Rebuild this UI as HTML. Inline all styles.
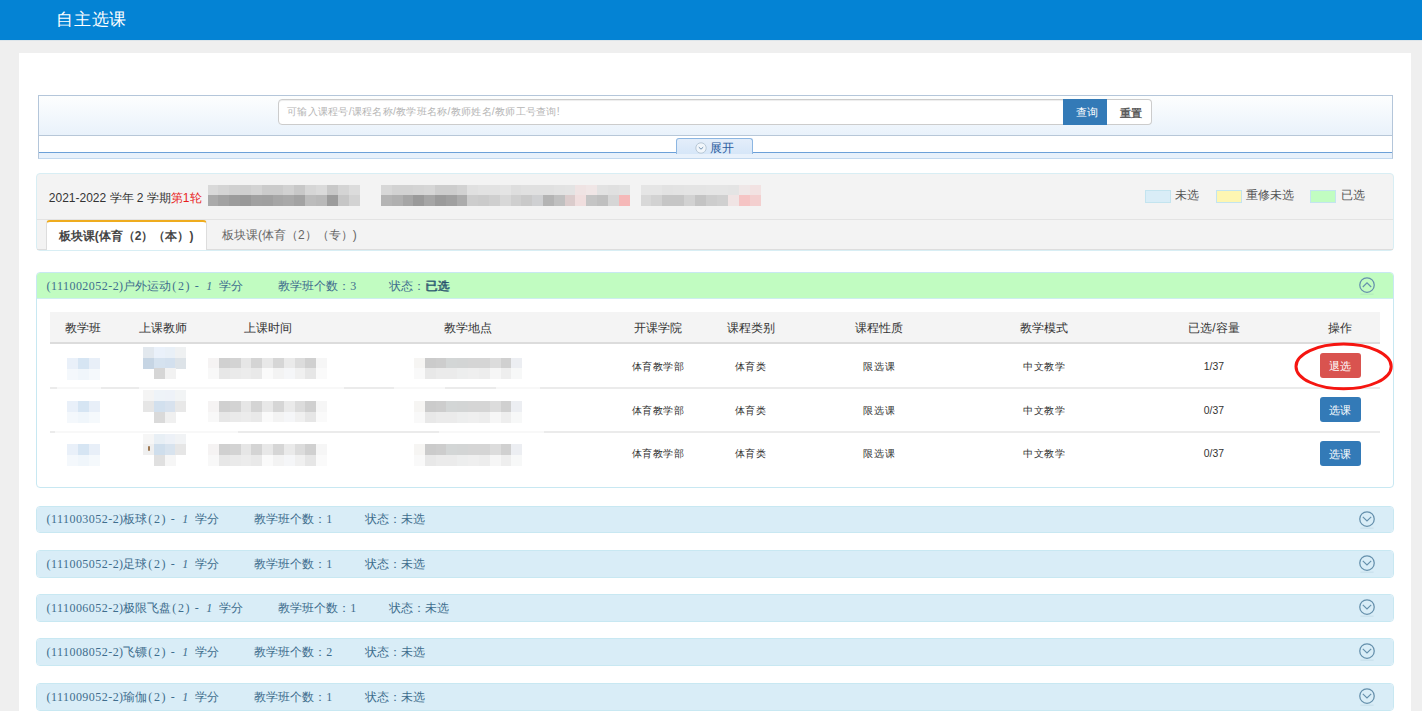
<!DOCTYPE html><html><head><meta charset="utf-8"><style>*{margin:0;padding:0;box-sizing:border-box}
html,body{width:1422px;height:711px;overflow:hidden;background:#efefef;font-family:"Liberation Sans",sans-serif;color:#333;position:relative}
.a{position:absolute}
#hdr{left:0;top:0;width:1422px;height:40px;background:#0483d4}
#title{left:55.8px;top:8px;letter-spacing:.9px;font-size:17.4px;color:#fff;line-height:22px;white-space:nowrap}
#main{left:19px;top:53px;width:1392px;height:700px;background:#fff}
#sbox{left:38px;top:95px;width:1355px;height:64px;border:1px solid #b4c6da;border-bottom-color:#c2d8ee;background:#fff}
#sbox .g{left:0;top:0;width:1353px;height:40px;background:linear-gradient(#fdfefe,#e9f2fb);border-bottom:1px solid #b7c7d8}
#sbox .strip{left:0;top:56px;width:1353px;height:6px;background:#e8f1fb;border-top:1.5px solid #6ca0d8}
#inp{left:239.3px;top:3.4px;width:785.7px;height:25.6px;border:1px solid #ccc;border-radius:4px 0 0 4px;background:#fff;box-shadow:inset 0 1px 1px rgba(0,0,0,.075)}
#inp span{position:absolute;left:7.7px;top:5.5px;letter-spacing:.28px;font-size:10.4px;line-height:12px;color:#b5b5b5;white-space:nowrap}
#bq{left:1024px;top:3px;width:44px;height:26px;background:#337ab7;color:#fff;font-size:11px;text-align:center;line-height:26.5px;padding-left:3px}
#br{left:1068px;top:3px;width:45px;height:26px;background:#fff;border:1px solid #ccc;border-left:none;border-radius:0 4px 4px 0;color:#5c5c5c;font-size:11px;text-align:center;line-height:26px;padding-left:4px;font-weight:bold}
#exp{left:636.6px;top:41.7px;width:77.5px;height:16px;border:1.5px solid #8cb6e2;border-bottom:none;border-radius:3px 3px 0 0;background:linear-gradient(#e4eefa,#d6e6f8)}
#exp .t{left:33px;top:2px;font-size:12px;line-height:14px;color:#2a5b9e;white-space:nowrap}
#info{left:36px;top:173px;width:1358px;height:78px;background:#f3f3f3;border:1px solid #d8eef4;border-radius:4px}
#info .ln{left:0;top:45px;width:1356px;height:1px;background:#e3e3e3}
#sem{left:11.8px;top:15.5px;font-size:12px;line-height:16px;color:#333;white-space:nowrap}
#sem b{font-weight:normal;color:#e81e1e}
.blur i{position:absolute;display:block}
#tab1{left:8.8px;top:45.6px;width:161.2px;height:30.4px;background:#fff;border-top:2px solid #efac1e;border-left:1px solid #ddd;border-right:1px solid #ddd;border-radius:4px 4px 0 0}
#tab1 span{position:absolute;left:12px;top:7.5px;font-size:12px;line-height:15px;font-weight:bold;color:#444;white-space:nowrap}
#tab2{left:185px;top:53.5px;font-size:12px;line-height:15px;color:#666;white-space:nowrap}
.lg{position:absolute;top:16.4px;width:26px;height:12.5px;border:1px solid #c3e4ef}
.lt{position:absolute;top:12.6px;font-size:12px;line-height:16px;color:#555;white-space:nowrap}
.cp{position:absolute;left:36px;width:1358px;border:1px solid #c8e8f2;border-radius:4px;background:#fff;overflow:hidden}
.ch{position:absolute;left:0;top:0;width:100%;height:26.5px;background:#d9edf7}
.hd span{position:absolute;white-space:nowrap;font-size:12px;line-height:14px;color:#3f6e8e}
.hd .ser{font-family:"Liberation Serif",serif}
.th{width:1330px;height:32px;background:#f4f4f4;border-bottom:2px solid #dcdcdc}
.hc{position:absolute;width:160px;margin-left:-80px;text-align:center;font-size:12px;line-height:14px;color:#333;white-space:nowrap}
.dc{position:absolute;width:160px;margin-left:-80px;text-align:center;letter-spacing:.6px;font-size:10.4px;line-height:13px;color:#333;white-space:nowrap}
.rl{position:absolute;width:1330px;height:2px;background:#e4e4e4}
.btn{position:absolute;width:41.5px;height:24.5px;border-radius:3px;color:#fff;font-size:11px;line-height:24px;text-align:center}
</style></head><body>
<div id="hdr" class="a"><div id="title" class="a">自主选课</div></div>
<div class="a" style="left:0;top:40px;width:1422px;height:1px;background:#dde5ea"></div>
<div id="main" class="a"></div>
<div id="sbox" class="a">
  <div class="g a"></div>
  <div id="inp" class="a"><span>可输入课程号/课程名称/教学班名称/教师姓名/教师工号查询!</span></div>
  <div id="bq" class="a">查询</div>
  <div id="br" class="a">重置</div>
  <div class="strip a"></div>
  <div id="exp" class="a"><svg class="a" style="left:18px;top:3px" width="12" height="12" viewBox="0 0 12 12"><circle cx="6" cy="6" r="5.2" fill="#f1f6fb" stroke="#b8c8d6" stroke-width="1"/><path d="M3.8 5.2 L6 7.2 L8.2 5.2" fill="none" stroke="#6f8fb0" stroke-width="1"/></svg><div class="t a">展开</div></div>
</div>
<div id="info" class="a">
  <div id="sem" class="a">2021-2022 学年 2 学期<b>第1轮</b></div>
  <div class="ln a"></div><div class="a" style="left:0;top:75px;width:1356px;height:1px;background:#dddddd"></div>
  <div id="tab1" class="a"><span>板块课(体育（2）（本）)</span></div>
  <div id="tab2" class="a">板块课(体育（2）（专）)</div>
  <div class="lg" style="left:1108px;background:#d9edf7"></div><div class="lt" style="left:1137.5px">未选</div>
  <div class="lg" style="left:1179px;background:#fdf6b2"></div><div class="lt" style="left:1209px">重修未选</div>
  <div class="lg" style="left:1273px;background:#c1fdc1"></div><div class="lt" style="left:1303.5px">已选</div>
</div>
<div class="blur">
<i style="left:207.5px;top:184.5px;width:11.2px;height:11.1px;background:#d9d9d9"></i><i style="left:218.3px;top:184.5px;width:11.2px;height:11.1px;background:#d4d4d4"></i><i style="left:229.2px;top:184.5px;width:11.2px;height:11.1px;background:#d0d0d0"></i><i style="left:240.1px;top:184.5px;width:11.2px;height:11.1px;background:#cfcfcf"></i><i style="left:250.9px;top:184.5px;width:11.2px;height:11.1px;background:#d3d3d3"></i><i style="left:261.8px;top:184.5px;width:11.2px;height:11.1px;background:#cbcbcb"></i><i style="left:272.6px;top:184.5px;width:11.2px;height:11.1px;background:#cbcbcb"></i><i style="left:283.4px;top:184.5px;width:11.2px;height:11.1px;background:#d1d1d1"></i><i style="left:294.3px;top:184.5px;width:11.2px;height:11.1px;background:#c8c8c8"></i><i style="left:305.1px;top:184.5px;width:11.2px;height:11.1px;background:#d6d6d6"></i><i style="left:316.0px;top:184.5px;width:11.2px;height:11.1px;background:#dadada"></i><i style="left:326.9px;top:184.5px;width:11.2px;height:11.1px;background:#c8c8c8"></i><i style="left:337.7px;top:184.5px;width:11.2px;height:11.1px;background:#d4d4d4"></i><i style="left:348.5px;top:184.5px;width:11.2px;height:11.1px;background:#dcdcdc"></i><i style="left:207.5px;top:195.3px;width:11.2px;height:11.1px;background:#aaaaaa"></i><i style="left:218.3px;top:195.3px;width:11.2px;height:11.1px;background:#a2a2a2"></i><i style="left:229.2px;top:195.3px;width:11.2px;height:11.1px;background:#9c9c9c"></i><i style="left:240.1px;top:195.3px;width:11.2px;height:11.1px;background:#999999"></i><i style="left:250.9px;top:195.3px;width:11.2px;height:11.1px;background:#a1a1a1"></i><i style="left:261.8px;top:195.3px;width:11.2px;height:11.1px;background:#a0a0a0"></i><i style="left:272.6px;top:195.3px;width:11.2px;height:11.1px;background:#a6a6a6"></i><i style="left:283.4px;top:195.3px;width:11.2px;height:11.1px;background:#a9a9a9"></i><i style="left:294.3px;top:195.3px;width:11.2px;height:11.1px;background:#a3a3a3"></i><i style="left:305.1px;top:195.3px;width:11.2px;height:11.1px;background:#bcbcbc"></i><i style="left:316.0px;top:195.3px;width:11.2px;height:11.1px;background:#b9b9b9"></i><i style="left:326.9px;top:195.3px;width:11.2px;height:11.1px;background:#9c9c9c"></i><i style="left:337.7px;top:195.3px;width:11.2px;height:11.1px;background:#c6c6c6"></i><i style="left:348.5px;top:195.3px;width:11.2px;height:11.1px;background:#d3d3d3"></i>
<i style="left:381.0px;top:184.5px;width:11.1px;height:11.1px;background:#d7d7d7"></i><i style="left:391.8px;top:184.5px;width:11.1px;height:11.1px;background:#d2d2d2"></i><i style="left:402.6px;top:184.5px;width:11.1px;height:11.1px;background:#d2d2d2"></i><i style="left:413.4px;top:184.5px;width:11.1px;height:11.1px;background:#d4d4d4"></i><i style="left:424.2px;top:184.5px;width:11.1px;height:11.1px;background:#d6d6d6"></i><i style="left:435.0px;top:184.5px;width:11.1px;height:11.1px;background:#cdcdcd"></i><i style="left:445.8px;top:184.5px;width:11.1px;height:11.1px;background:#cdcdcd"></i><i style="left:456.6px;top:184.5px;width:11.1px;height:11.1px;background:#d2d2d2"></i><i style="left:467.4px;top:184.5px;width:11.1px;height:11.1px;background:#e0e0e0"></i><i style="left:478.2px;top:184.5px;width:11.1px;height:11.1px;background:#e2e2e2"></i><i style="left:489.0px;top:184.5px;width:11.1px;height:11.1px;background:#e2e2e2"></i><i style="left:499.8px;top:184.5px;width:11.1px;height:11.1px;background:#e4e4e4"></i><i style="left:510.6px;top:184.5px;width:11.1px;height:11.1px;background:#dedede"></i><i style="left:521.4px;top:184.5px;width:11.1px;height:11.1px;background:#e0e0e0"></i><i style="left:532.2px;top:184.5px;width:11.1px;height:11.1px;background:#e0e0e0"></i><i style="left:543.0px;top:184.5px;width:11.1px;height:11.1px;background:#e0e0e0"></i><i style="left:553.8px;top:184.5px;width:11.1px;height:11.1px;background:#e2e2e2"></i><i style="left:564.6px;top:184.5px;width:11.1px;height:11.1px;background:#e3e3e3"></i><i style="left:575.4px;top:184.5px;width:11.1px;height:11.1px;background:#efe3e3"></i><i style="left:586.2px;top:184.5px;width:11.1px;height:11.1px;background:#f0e6e6"></i><i style="left:597.0px;top:184.5px;width:11.1px;height:11.1px;background:#e2e2e2"></i><i style="left:607.8px;top:184.5px;width:11.1px;height:11.1px;background:#e0e0e0"></i><i style="left:618.6px;top:184.5px;width:11.1px;height:11.1px;background:#e2e2e2"></i><i style="left:381.0px;top:195.3px;width:11.1px;height:11.1px;background:#b4b4b4"></i><i style="left:391.8px;top:195.3px;width:11.1px;height:11.1px;background:#b0b0b0"></i><i style="left:402.6px;top:195.3px;width:11.1px;height:11.1px;background:#a6a6a6"></i><i style="left:413.4px;top:195.3px;width:11.1px;height:11.1px;background:#9a9a9a"></i><i style="left:424.2px;top:195.3px;width:11.1px;height:11.1px;background:#a6a6a6"></i><i style="left:435.0px;top:195.3px;width:11.1px;height:11.1px;background:#9b9b9b"></i><i style="left:445.8px;top:195.3px;width:11.1px;height:11.1px;background:#a0a0a0"></i><i style="left:456.6px;top:195.3px;width:11.1px;height:11.1px;background:#acacac"></i><i style="left:467.4px;top:195.3px;width:11.1px;height:11.1px;background:#cdcdcd"></i><i style="left:478.2px;top:195.3px;width:11.1px;height:11.1px;background:#cbcbcb"></i><i style="left:489.0px;top:195.3px;width:11.1px;height:11.1px;background:#cfcfcf"></i><i style="left:499.8px;top:195.3px;width:11.1px;height:11.1px;background:#d8d8d8"></i><i style="left:510.6px;top:195.3px;width:11.1px;height:11.1px;background:#cfcfcf"></i><i style="left:521.4px;top:195.3px;width:11.1px;height:11.1px;background:#c9c9c9"></i><i style="left:532.2px;top:195.3px;width:11.1px;height:11.1px;background:#cfd0d2"></i><i style="left:543.0px;top:195.3px;width:11.1px;height:11.1px;background:#b4b4b4"></i><i style="left:553.8px;top:195.3px;width:11.1px;height:11.1px;background:#c0c0c0"></i><i style="left:564.6px;top:195.3px;width:11.1px;height:11.1px;background:#dbcccc"></i><i style="left:575.4px;top:195.3px;width:11.1px;height:11.1px;background:#f0dede"></i><i style="left:586.2px;top:195.3px;width:11.1px;height:11.1px;background:#c5c5c5"></i><i style="left:597.0px;top:195.3px;width:11.1px;height:11.1px;background:#c0c0c0"></i><i style="left:607.8px;top:195.3px;width:11.1px;height:11.1px;background:#d6d6d6"></i><i style="left:618.6px;top:195.3px;width:11.1px;height:11.1px;background:#f5b8b8"></i>
<i style="left:640.5px;top:184.5px;width:11.2px;height:11.1px;background:#e5e5e5"></i><i style="left:651.4px;top:184.5px;width:11.2px;height:11.1px;background:#e5e5e5"></i><i style="left:662.3px;top:184.5px;width:11.2px;height:11.1px;background:#e2e2e2"></i><i style="left:673.2px;top:184.5px;width:11.2px;height:11.1px;background:#e3e3e3"></i><i style="left:684.1px;top:184.5px;width:11.2px;height:11.1px;background:#e4e4e4"></i><i style="left:695.0px;top:184.5px;width:11.2px;height:11.1px;background:#e4e4e4"></i><i style="left:705.9px;top:184.5px;width:11.2px;height:11.1px;background:#e5e5e5"></i><i style="left:716.8px;top:184.5px;width:11.2px;height:11.1px;background:#e5e5e5"></i><i style="left:727.7px;top:184.5px;width:11.2px;height:11.1px;background:#e4e4e4"></i><i style="left:738.6px;top:184.5px;width:11.2px;height:11.1px;background:#efe7e7"></i><i style="left:749.5px;top:184.5px;width:11.2px;height:11.1px;background:#f2e2e2"></i><i style="left:640.5px;top:195.3px;width:11.2px;height:11.1px;background:#d8d8d8"></i><i style="left:651.4px;top:195.3px;width:11.2px;height:11.1px;background:#d2d2d2"></i><i style="left:662.3px;top:195.3px;width:11.2px;height:11.1px;background:#c6c6c6"></i><i style="left:673.2px;top:195.3px;width:11.2px;height:11.1px;background:#c6c6c6"></i><i style="left:684.1px;top:195.3px;width:11.2px;height:11.1px;background:#d2d2d2"></i><i style="left:695.0px;top:195.3px;width:11.2px;height:11.1px;background:#c4c4c4"></i><i style="left:705.9px;top:195.3px;width:11.2px;height:11.1px;background:#cdcdcd"></i><i style="left:716.8px;top:195.3px;width:11.2px;height:11.1px;background:#d0d0d0"></i><i style="left:727.7px;top:195.3px;width:11.2px;height:11.1px;background:#f0e4e4"></i><i style="left:738.6px;top:195.3px;width:11.2px;height:11.1px;background:#f5c4c4"></i><i style="left:749.5px;top:195.3px;width:11.2px;height:11.1px;background:#f3cfcf"></i>
</div>
<div class="cp" style="top:272.3px;height:216.2px"><div class="ch" style="background:#c1fcc1;height:26px;border-bottom:1px solid #cdeef0"></div></div>
<div class="cp" style="top:506px;height:27px"><div class="ch"></div></div>
<div class="cp" style="top:550px;height:27.6px"><div class="ch"></div></div>
<div class="cp" style="top:594px;height:28px"><div class="ch"></div></div>
<div class="cp" style="top:638px;height:28px"><div class="ch"></div></div>
<div class="cp" style="top:683px;height:28px"><div class="ch"></div></div>
<div class="hd">
<span class="ser" style="left:46.5px;top:278.5px;letter-spacing:.46px">(111002052-2)</span><span class="cjk" style="left:123.3px;top:278.5px">户外运动</span><span class="ser" style="left:172.3px;top:278.5px;letter-spacing:1.6px">(2)</span><span class="ser" style="left:194.8px;top:278.5px">-</span><span class="ser" style="left:206.3px;top:278.5px;font-style:italic">1</span><span class="cjk" style="left:219.3px;top:278.5px">学分</span><span class="cjk" style="left:277.7px;top:278.5px">教学班个数：</span><span class="ser" style="left:350.2px;top:278.5px">3</span><span class="cjk" style="left:389.2px;top:278.5px">状态：<b style="font-weight:normal;color:#234f6c;text-shadow:.45px 0 0 #234f6c">已选</b></span>
<span class="ser" style="left:46.5px;top:512.2px;letter-spacing:.46px">(111003052-2)</span><span class="cjk" style="left:123.3px;top:512.2px">板球</span><span class="ser" style="left:148.3px;top:512.2px;letter-spacing:1.6px">(2)</span><span class="ser" style="left:170.8px;top:512.2px">-</span><span class="ser" style="left:182.3px;top:512.2px;font-style:italic">1</span><span class="cjk" style="left:195.3px;top:512.2px">学分</span><span class="cjk" style="left:253.7px;top:512.2px">教学班个数：</span><span class="ser" style="left:326.2px;top:512.2px">1</span><span class="cjk" style="left:365.2px;top:512.2px">状态：未选</span>
<span class="ser" style="left:46.5px;top:556.6px;letter-spacing:.46px">(111005052-2)</span><span class="cjk" style="left:123.3px;top:556.6px">足球</span><span class="ser" style="left:148.3px;top:556.6px;letter-spacing:1.6px">(2)</span><span class="ser" style="left:170.8px;top:556.6px">-</span><span class="ser" style="left:182.3px;top:556.6px;font-style:italic">1</span><span class="cjk" style="left:195.3px;top:556.6px">学分</span><span class="cjk" style="left:253.7px;top:556.6px">教学班个数：</span><span class="ser" style="left:326.2px;top:556.6px">1</span><span class="cjk" style="left:365.2px;top:556.6px">状态：未选</span>
<span class="ser" style="left:46.5px;top:600.8000000000001px;letter-spacing:.46px">(111006052-2)</span><span class="cjk" style="left:123.3px;top:600.8000000000001px">极限飞盘</span><span class="ser" style="left:172.3px;top:600.8000000000001px;letter-spacing:1.6px">(2)</span><span class="ser" style="left:194.8px;top:600.8000000000001px">-</span><span class="ser" style="left:206.3px;top:600.8000000000001px;font-style:italic">1</span><span class="cjk" style="left:219.3px;top:600.8000000000001px">学分</span><span class="cjk" style="left:277.7px;top:600.8000000000001px">教学班个数：</span><span class="ser" style="left:350.2px;top:600.8000000000001px">1</span><span class="cjk" style="left:389.2px;top:600.8000000000001px">状态：未选</span>
<span class="ser" style="left:46.5px;top:645.0px;letter-spacing:.46px">(111008052-2)</span><span class="cjk" style="left:123.3px;top:645.0px">飞镖</span><span class="ser" style="left:148.3px;top:645.0px;letter-spacing:1.6px">(2)</span><span class="ser" style="left:170.8px;top:645.0px">-</span><span class="ser" style="left:182.3px;top:645.0px;font-style:italic">1</span><span class="cjk" style="left:195.3px;top:645.0px">学分</span><span class="cjk" style="left:253.7px;top:645.0px">教学班个数：</span><span class="ser" style="left:326.2px;top:645.0px">2</span><span class="cjk" style="left:365.2px;top:645.0px">状态：未选</span>
<span class="ser" style="left:46.5px;top:690.2px;letter-spacing:.46px">(111009052-2)</span><span class="cjk" style="left:123.3px;top:690.2px">瑜伽</span><span class="ser" style="left:148.3px;top:690.2px;letter-spacing:1.6px">(2)</span><span class="ser" style="left:170.8px;top:690.2px">-</span><span class="ser" style="left:182.3px;top:690.2px;font-style:italic">1</span><span class="cjk" style="left:195.3px;top:690.2px">学分</span><span class="cjk" style="left:253.7px;top:690.2px">教学班个数：</span><span class="ser" style="left:326.2px;top:690.2px">1</span><span class="cjk" style="left:365.2px;top:690.2px">状态：未选</span>
</div>
<svg class="a" style="left:1357.7px;top:276.1px" width="18" height="20" viewBox="-9 -9 18 20"><circle cx="0" cy="0" r="7.25" fill="none" stroke="#6590ac" stroke-width="1.25"/><path d="M-4.2 2 L0 -2.1 L4.2 2" fill="none" stroke="#6590ac" stroke-width="1.15"/><rect x="-6.5" y="8.7" width="13" height=".9" fill="#6590ac" opacity=".18"/></svg>
<svg class="a" style="left:1357.7px;top:509.6px" width="18" height="20" viewBox="-9 -9 18 20"><circle cx="0" cy="0" r="7.25" fill="none" stroke="#6590ac" stroke-width="1.25"/><path d="M-4.2 -2.1 L0 2 L4.2 -2.1" fill="none" stroke="#6590ac" stroke-width="1.15"/><rect x="-6.5" y="8.7" width="13" height=".9" fill="#6590ac" opacity=".18"/></svg>
<svg class="a" style="left:1357.7px;top:553.6px" width="18" height="20" viewBox="-9 -9 18 20"><circle cx="0" cy="0" r="7.25" fill="none" stroke="#6590ac" stroke-width="1.25"/><path d="M-4.2 -2.1 L0 2 L4.2 -2.1" fill="none" stroke="#6590ac" stroke-width="1.15"/><rect x="-6.5" y="8.7" width="13" height=".9" fill="#6590ac" opacity=".18"/></svg>
<svg class="a" style="left:1357.7px;top:597.6px" width="18" height="20" viewBox="-9 -9 18 20"><circle cx="0" cy="0" r="7.25" fill="none" stroke="#6590ac" stroke-width="1.25"/><path d="M-4.2 -2.1 L0 2 L4.2 -2.1" fill="none" stroke="#6590ac" stroke-width="1.15"/><rect x="-6.5" y="8.7" width="13" height=".9" fill="#6590ac" opacity=".18"/></svg>
<svg class="a" style="left:1357.7px;top:641.6px" width="18" height="20" viewBox="-9 -9 18 20"><circle cx="0" cy="0" r="7.25" fill="none" stroke="#6590ac" stroke-width="1.25"/><path d="M-4.2 -2.1 L0 2 L4.2 -2.1" fill="none" stroke="#6590ac" stroke-width="1.15"/><rect x="-6.5" y="8.7" width="13" height=".9" fill="#6590ac" opacity=".18"/></svg>
<svg class="a" style="left:1357.7px;top:686.6px" width="18" height="20" viewBox="-9 -9 18 20"><circle cx="0" cy="0" r="7.25" fill="none" stroke="#6590ac" stroke-width="1.25"/><path d="M-4.2 -2.1 L0 2 L4.2 -2.1" fill="none" stroke="#6590ac" stroke-width="1.15"/><rect x="-6.5" y="8.7" width="13" height=".9" fill="#6590ac" opacity=".18"/></svg>
<div class="th a" style="left:50px;top:311.7px"></div>
<div class="hc" style="left:83.3px;top:321px">教学班</div>
<div class="hc" style="left:163px;top:321px">上课教师</div>
<div class="hc" style="left:268px;top:321px">上课时间</div>
<div class="hc" style="left:468.4px;top:321px">教学地点</div>
<div class="hc" style="left:658px;top:321px">开课学院</div>
<div class="hc" style="left:750.5px;top:321px">课程类别</div>
<div class="hc" style="left:879.4px;top:321px">课程性质</div>
<div class="hc" style="left:1044.4px;top:321px">教学模式</div>
<div class="hc" style="left:1213.9px;top:321px">已选/容量</div>
<div class="hc" style="left:1339.7px;top:321px">操作</div>
<div class="dc" style="left:658px;top:360.1px">体育教学部</div>
<div class="dc" style="left:750.5px;top:360.1px">体育类</div>
<div class="dc" style="left:879.4px;top:360.1px">限选课</div>
<div class="dc" style="left:1044.4px;top:360.1px">中文教学</div>
<div class="dc" style="left:1213.9px;top:360.1px;letter-spacing:0">1/37</div>
<div class="dc" style="left:658px;top:403.7px">体育教学部</div>
<div class="dc" style="left:750.5px;top:403.7px">体育类</div>
<div class="dc" style="left:879.4px;top:403.7px">限选课</div>
<div class="dc" style="left:1044.4px;top:403.7px">中文教学</div>
<div class="dc" style="left:1213.9px;top:403.7px;letter-spacing:0">0/37</div>
<div class="dc" style="left:658px;top:447.1px">体育教学部</div>
<div class="dc" style="left:750.5px;top:447.1px">体育类</div>
<div class="dc" style="left:879.4px;top:447.1px">限选课</div>
<div class="dc" style="left:1044.4px;top:447.1px">中文教学</div>
<div class="dc" style="left:1213.9px;top:447.1px;letter-spacing:0">0/37</div>
<div class="rl" style="left:50px;top:387px;background:linear-gradient(90deg,#ebebeb 0px,#ebebeb 7px,#f8f8f8 7px,#f8f8f8 51px,#ebebeb 51px,#ebebeb 89px,#f8f8f8 89px,#f8f8f8 294px,#ebebeb 294px,#ebebeb 344px,#f8f8f8 344px,#f8f8f8 395px,#ebebeb 395px,#ebebeb 446px,#f8f8f8 446px,#f8f8f8 490px,#ebebeb 490px,#ebebeb 1330px)"></div>
<div class="rl" style="left:50px;top:431px;background:linear-gradient(90deg,#ebebeb 0px,#ebebeb 5px,#f8f8f8 5px,#f8f8f8 188px,#ebebeb 188px,#ebebeb 389px,#f8f8f8 389px,#f8f8f8 494px,#ebebeb 494px,#ebebeb 1330px)"></div>
<div class="blur">
<i style="left:67.3px;top:357.7px;width:11.2px;height:11.2px;background:#e9f0f9"></i><i style="left:78.2px;top:357.7px;width:11.2px;height:11.2px;background:#d6e5f3"></i><i style="left:89.1px;top:357.7px;width:11.2px;height:11.2px;background:#e8eff8"></i><i style="left:67.3px;top:368.6px;width:11.2px;height:11.2px;background:#f4f8fc"></i><i style="left:78.2px;top:368.6px;width:11.2px;height:11.2px;background:#f0f6fb"></i><i style="left:89.1px;top:368.6px;width:11.2px;height:11.2px;background:#f5f9fc"></i>
<i style="left:143.2px;top:347.0px;width:11.1px;height:11.0px;background:#e2e8ee"></i><i style="left:153.9px;top:347.0px;width:11.1px;height:11.0px;background:#eaf1fa"></i><i style="left:164.7px;top:347.0px;width:11.1px;height:11.0px;background:#e9f0f7"></i><i style="left:175.4px;top:347.0px;width:11.1px;height:11.0px;background:#eff1f2"></i><i style="left:143.2px;top:357.7px;width:11.1px;height:11.0px;background:#c6d5e4"></i><i style="left:153.9px;top:357.7px;width:11.1px;height:11.0px;background:#d5e2ef"></i><i style="left:164.7px;top:357.7px;width:11.1px;height:11.0px;background:#d3e0ee"></i><i style="left:175.4px;top:357.7px;width:11.1px;height:11.0px;background:#dde3e8"></i><i style="left:153.9px;top:368.4px;width:11.1px;height:11.0px;background:#d6d6d6"></i><i style="left:164.7px;top:368.4px;width:11.1px;height:11.0px;background:#f2f2f2"></i>
<i style="left:208.0px;top:357.7px;width:11.1px;height:10.9px;background:#f5f3f3"></i><i style="left:218.8px;top:357.7px;width:11.1px;height:10.9px;background:#d0d0d0"></i><i style="left:229.6px;top:357.7px;width:11.1px;height:10.9px;background:#d3d3d3"></i><i style="left:240.5px;top:357.7px;width:11.1px;height:10.9px;background:#e6e6e6"></i><i style="left:251.3px;top:357.7px;width:11.1px;height:10.9px;background:#d4d4d4"></i><i style="left:262.1px;top:357.7px;width:11.1px;height:10.9px;background:#e8e8e8"></i><i style="left:272.9px;top:357.7px;width:11.1px;height:10.9px;background:#d6d6d6"></i><i style="left:283.7px;top:357.7px;width:11.1px;height:10.9px;background:#eaeaea"></i><i style="left:294.6px;top:357.7px;width:11.1px;height:10.9px;background:#dcdcdc"></i><i style="left:305.4px;top:357.7px;width:11.1px;height:10.9px;background:#d0d0d0"></i><i style="left:316.2px;top:357.7px;width:11.1px;height:10.9px;background:#f6f6f6"></i><i style="left:208.0px;top:368.3px;width:11.1px;height:10.9px;background:#f8f8f8"></i><i style="left:218.8px;top:368.3px;width:11.1px;height:10.9px;background:#e7e7e7"></i><i style="left:229.6px;top:368.3px;width:11.1px;height:10.9px;background:#eaeaea"></i><i style="left:240.5px;top:368.3px;width:11.1px;height:10.9px;background:#ececec"></i><i style="left:251.3px;top:368.3px;width:11.1px;height:10.9px;background:#e9e9e9"></i><i style="left:262.1px;top:368.3px;width:11.1px;height:10.9px;background:#fafafa"></i><i style="left:272.9px;top:368.3px;width:11.1px;height:10.9px;background:#f3f3f3"></i><i style="left:283.7px;top:368.3px;width:11.1px;height:10.9px;background:#f5f6f8"></i><i style="left:294.6px;top:368.3px;width:11.1px;height:10.9px;background:#f0f0f0"></i><i style="left:305.4px;top:368.3px;width:11.1px;height:10.9px;background:#e6e6e6"></i><i style="left:316.2px;top:368.3px;width:11.1px;height:10.9px;background:#fafafa"></i>
<i style="left:414.0px;top:357.7px;width:11.1px;height:11.0px;background:#f6f5f3"></i><i style="left:424.8px;top:357.7px;width:11.1px;height:11.0px;background:#cbcbcb"></i><i style="left:435.6px;top:357.7px;width:11.1px;height:11.0px;background:#cdcdcd"></i><i style="left:446.4px;top:357.7px;width:11.1px;height:11.0px;background:#d3d6d6"></i><i style="left:457.2px;top:357.7px;width:11.1px;height:11.0px;background:#d3d5d5"></i><i style="left:468.1px;top:357.7px;width:11.1px;height:11.0px;background:#d5d5d5"></i><i style="left:478.9px;top:357.7px;width:11.1px;height:11.0px;background:#d5d5d5"></i><i style="left:489.7px;top:357.7px;width:11.1px;height:11.0px;background:#dcdcdc"></i><i style="left:500.5px;top:357.7px;width:11.1px;height:11.0px;background:#d0d0d0"></i><i style="left:511.3px;top:357.7px;width:11.1px;height:11.0px;background:#eceef2"></i><i style="left:414.0px;top:368.3px;width:11.1px;height:11.0px;background:#f9f9f9"></i><i style="left:424.8px;top:368.3px;width:11.1px;height:11.0px;background:#e8e8e8"></i><i style="left:435.6px;top:368.3px;width:11.1px;height:11.0px;background:#ebebeb"></i><i style="left:446.4px;top:368.3px;width:11.1px;height:11.0px;background:#ebebeb"></i><i style="left:457.2px;top:368.3px;width:11.1px;height:11.0px;background:#edeeee"></i><i style="left:468.1px;top:368.3px;width:11.1px;height:11.0px;background:#efefef"></i><i style="left:478.9px;top:368.3px;width:11.1px;height:11.0px;background:#ededed"></i><i style="left:489.7px;top:368.3px;width:11.1px;height:11.0px;background:#f6f6f6"></i><i style="left:500.5px;top:368.3px;width:11.1px;height:11.0px;background:#eeeeee"></i><i style="left:511.3px;top:368.3px;width:11.1px;height:11.0px;background:#f7f8f8"></i>
<i style="left:67.3px;top:401.0px;width:11.2px;height:11.2px;background:#e9f0f9"></i><i style="left:78.2px;top:401.0px;width:11.2px;height:11.2px;background:#d6e5f3"></i><i style="left:89.1px;top:401.0px;width:11.2px;height:11.2px;background:#e8eff8"></i><i style="left:67.3px;top:411.9px;width:11.2px;height:11.2px;background:#f4f8fc"></i><i style="left:78.2px;top:411.9px;width:11.2px;height:11.2px;background:#f0f6fb"></i><i style="left:89.1px;top:411.9px;width:11.2px;height:11.2px;background:#f5f9fc"></i>
<i style="left:143.2px;top:390.3px;width:11.1px;height:11.0px;background:#f4f4f4"></i><i style="left:153.9px;top:390.3px;width:11.1px;height:11.0px;background:#eef3f8"></i><i style="left:164.7px;top:390.3px;width:11.1px;height:11.0px;background:#eef2f8"></i><i style="left:175.4px;top:390.3px;width:11.1px;height:11.0px;background:#f2f4f5"></i><i style="left:143.2px;top:401.0px;width:11.1px;height:11.0px;background:#e6e6e6"></i><i style="left:153.9px;top:401.0px;width:11.1px;height:11.0px;background:#d2e0ee"></i><i style="left:164.7px;top:401.0px;width:11.1px;height:11.0px;background:#d8e2ee"></i><i style="left:175.4px;top:401.0px;width:11.1px;height:11.0px;background:#e8e8e8"></i><i style="left:153.9px;top:411.7px;width:11.1px;height:11.0px;background:#dadada"></i><i style="left:164.7px;top:411.7px;width:11.1px;height:11.0px;background:#f0f0f0"></i>
<i style="left:208.0px;top:401.0px;width:11.1px;height:10.9px;background:#f5f3f3"></i><i style="left:218.8px;top:401.0px;width:11.1px;height:10.9px;background:#d0d0d0"></i><i style="left:229.6px;top:401.0px;width:11.1px;height:10.9px;background:#d3d3d3"></i><i style="left:240.5px;top:401.0px;width:11.1px;height:10.9px;background:#e6e6e6"></i><i style="left:251.3px;top:401.0px;width:11.1px;height:10.9px;background:#d4d4d4"></i><i style="left:262.1px;top:401.0px;width:11.1px;height:10.9px;background:#e8e8e8"></i><i style="left:272.9px;top:401.0px;width:11.1px;height:10.9px;background:#d6d6d6"></i><i style="left:283.7px;top:401.0px;width:11.1px;height:10.9px;background:#eaeaea"></i><i style="left:294.6px;top:401.0px;width:11.1px;height:10.9px;background:#dcdcdc"></i><i style="left:305.4px;top:401.0px;width:11.1px;height:10.9px;background:#d0d0d0"></i><i style="left:316.2px;top:401.0px;width:11.1px;height:10.9px;background:#f6f6f6"></i><i style="left:208.0px;top:411.6px;width:11.1px;height:10.9px;background:#f8f8f8"></i><i style="left:218.8px;top:411.6px;width:11.1px;height:10.9px;background:#e7e7e7"></i><i style="left:229.6px;top:411.6px;width:11.1px;height:10.9px;background:#eaeaea"></i><i style="left:240.5px;top:411.6px;width:11.1px;height:10.9px;background:#ececec"></i><i style="left:251.3px;top:411.6px;width:11.1px;height:10.9px;background:#e9e9e9"></i><i style="left:262.1px;top:411.6px;width:11.1px;height:10.9px;background:#fafafa"></i><i style="left:272.9px;top:411.6px;width:11.1px;height:10.9px;background:#f3f3f3"></i><i style="left:283.7px;top:411.6px;width:11.1px;height:10.9px;background:#f5f6f8"></i><i style="left:294.6px;top:411.6px;width:11.1px;height:10.9px;background:#f0f0f0"></i><i style="left:305.4px;top:411.6px;width:11.1px;height:10.9px;background:#e6e6e6"></i><i style="left:316.2px;top:411.6px;width:11.1px;height:10.9px;background:#fafafa"></i>
<i style="left:414.0px;top:401.0px;width:11.1px;height:11.0px;background:#f6f5f3"></i><i style="left:424.8px;top:401.0px;width:11.1px;height:11.0px;background:#cbcbcb"></i><i style="left:435.6px;top:401.0px;width:11.1px;height:11.0px;background:#cdcdcd"></i><i style="left:446.4px;top:401.0px;width:11.1px;height:11.0px;background:#d3d6d6"></i><i style="left:457.2px;top:401.0px;width:11.1px;height:11.0px;background:#d3d5d5"></i><i style="left:468.1px;top:401.0px;width:11.1px;height:11.0px;background:#d5d5d5"></i><i style="left:478.9px;top:401.0px;width:11.1px;height:11.0px;background:#d5d5d5"></i><i style="left:489.7px;top:401.0px;width:11.1px;height:11.0px;background:#dcdcdc"></i><i style="left:500.5px;top:401.0px;width:11.1px;height:11.0px;background:#d0d0d0"></i><i style="left:511.3px;top:401.0px;width:11.1px;height:11.0px;background:#eceef2"></i><i style="left:414.0px;top:411.6px;width:11.1px;height:11.0px;background:#f9f9f9"></i><i style="left:424.8px;top:411.6px;width:11.1px;height:11.0px;background:#e8e8e8"></i><i style="left:435.6px;top:411.6px;width:11.1px;height:11.0px;background:#ebebeb"></i><i style="left:446.4px;top:411.6px;width:11.1px;height:11.0px;background:#ebebeb"></i><i style="left:457.2px;top:411.6px;width:11.1px;height:11.0px;background:#edeeee"></i><i style="left:468.1px;top:411.6px;width:11.1px;height:11.0px;background:#efefef"></i><i style="left:478.9px;top:411.6px;width:11.1px;height:11.0px;background:#ededed"></i><i style="left:489.7px;top:411.6px;width:11.1px;height:11.0px;background:#f6f6f6"></i><i style="left:500.5px;top:411.6px;width:11.1px;height:11.0px;background:#eeeeee"></i><i style="left:511.3px;top:411.6px;width:11.1px;height:11.0px;background:#f7f8f8"></i>
<i style="left:67.3px;top:444.2px;width:11.2px;height:11.2px;background:#e9f0f9"></i><i style="left:78.2px;top:444.2px;width:11.2px;height:11.2px;background:#d6e5f3"></i><i style="left:89.1px;top:444.2px;width:11.2px;height:11.2px;background:#e8eff8"></i><i style="left:67.3px;top:455.1px;width:11.2px;height:11.2px;background:#f4f8fc"></i><i style="left:78.2px;top:455.1px;width:11.2px;height:11.2px;background:#f0f6fb"></i><i style="left:89.1px;top:455.1px;width:11.2px;height:11.2px;background:#f5f9fc"></i>
<i style="left:143.2px;top:433.5px;width:11.1px;height:11.0px;background:#f6f6f6"></i><i style="left:153.9px;top:433.5px;width:11.1px;height:11.0px;background:#e8eff5"></i><i style="left:164.7px;top:433.5px;width:11.1px;height:11.0px;background:#edf1f7"></i><i style="left:175.4px;top:433.5px;width:11.1px;height:11.0px;background:#f1f3f5"></i><i style="left:143.2px;top:444.2px;width:11.1px;height:11.0px;background:#efefef"></i><i style="left:153.9px;top:444.2px;width:11.1px;height:11.0px;background:#cfdeec"></i><i style="left:164.7px;top:444.2px;width:11.1px;height:11.0px;background:#d8e3ee"></i><i style="left:175.4px;top:444.2px;width:11.1px;height:11.0px;background:#e6e6e6"></i><i style="left:153.9px;top:454.9px;width:11.1px;height:11.0px;background:#e0e0e0"></i><i style="left:164.7px;top:454.9px;width:11.1px;height:11.0px;background:#f6f6f6"></i>
<i style="left:208.0px;top:444.2px;width:11.1px;height:10.9px;background:#f5f3f3"></i><i style="left:218.8px;top:444.2px;width:11.1px;height:10.9px;background:#d0d0d0"></i><i style="left:229.6px;top:444.2px;width:11.1px;height:10.9px;background:#d3d3d3"></i><i style="left:240.5px;top:444.2px;width:11.1px;height:10.9px;background:#e6e6e6"></i><i style="left:251.3px;top:444.2px;width:11.1px;height:10.9px;background:#d4d4d4"></i><i style="left:262.1px;top:444.2px;width:11.1px;height:10.9px;background:#e8e8e8"></i><i style="left:272.9px;top:444.2px;width:11.1px;height:10.9px;background:#d6d6d6"></i><i style="left:283.7px;top:444.2px;width:11.1px;height:10.9px;background:#eaeaea"></i><i style="left:294.6px;top:444.2px;width:11.1px;height:10.9px;background:#dcdcdc"></i><i style="left:305.4px;top:444.2px;width:11.1px;height:10.9px;background:#d0d0d0"></i><i style="left:316.2px;top:444.2px;width:11.1px;height:10.9px;background:#f6f6f6"></i><i style="left:208.0px;top:454.8px;width:11.1px;height:10.9px;background:#f8f8f8"></i><i style="left:218.8px;top:454.8px;width:11.1px;height:10.9px;background:#e7e7e7"></i><i style="left:229.6px;top:454.8px;width:11.1px;height:10.9px;background:#eaeaea"></i><i style="left:240.5px;top:454.8px;width:11.1px;height:10.9px;background:#ececec"></i><i style="left:251.3px;top:454.8px;width:11.1px;height:10.9px;background:#e9e9e9"></i><i style="left:262.1px;top:454.8px;width:11.1px;height:10.9px;background:#fafafa"></i><i style="left:272.9px;top:454.8px;width:11.1px;height:10.9px;background:#f3f3f3"></i><i style="left:283.7px;top:454.8px;width:11.1px;height:10.9px;background:#f5f6f8"></i><i style="left:294.6px;top:454.8px;width:11.1px;height:10.9px;background:#f0f0f0"></i><i style="left:305.4px;top:454.8px;width:11.1px;height:10.9px;background:#e6e6e6"></i><i style="left:316.2px;top:454.8px;width:11.1px;height:10.9px;background:#fafafa"></i>
<i style="left:414.0px;top:444.2px;width:11.1px;height:11.0px;background:#f6f5f3"></i><i style="left:424.8px;top:444.2px;width:11.1px;height:11.0px;background:#cbcbcb"></i><i style="left:435.6px;top:444.2px;width:11.1px;height:11.0px;background:#cdcdcd"></i><i style="left:446.4px;top:444.2px;width:11.1px;height:11.0px;background:#d3d6d6"></i><i style="left:457.2px;top:444.2px;width:11.1px;height:11.0px;background:#d3d5d5"></i><i style="left:468.1px;top:444.2px;width:11.1px;height:11.0px;background:#d5d5d5"></i><i style="left:478.9px;top:444.2px;width:11.1px;height:11.0px;background:#d5d5d5"></i><i style="left:489.7px;top:444.2px;width:11.1px;height:11.0px;background:#dcdcdc"></i><i style="left:500.5px;top:444.2px;width:11.1px;height:11.0px;background:#d0d0d0"></i><i style="left:511.3px;top:444.2px;width:11.1px;height:11.0px;background:#eceef2"></i><i style="left:414.0px;top:454.8px;width:11.1px;height:11.0px;background:#f9f9f9"></i><i style="left:424.8px;top:454.8px;width:11.1px;height:11.0px;background:#e8e8e8"></i><i style="left:435.6px;top:454.8px;width:11.1px;height:11.0px;background:#ebebeb"></i><i style="left:446.4px;top:454.8px;width:11.1px;height:11.0px;background:#ebebeb"></i><i style="left:457.2px;top:454.8px;width:11.1px;height:11.0px;background:#edeeee"></i><i style="left:468.1px;top:454.8px;width:11.1px;height:11.0px;background:#efefef"></i><i style="left:478.9px;top:454.8px;width:11.1px;height:11.0px;background:#ededed"></i><i style="left:489.7px;top:454.8px;width:11.1px;height:11.0px;background:#f6f6f6"></i><i style="left:500.5px;top:454.8px;width:11.1px;height:11.0px;background:#eeeeee"></i><i style="left:511.3px;top:454.8px;width:11.1px;height:11.0px;background:#f7f8f8"></i>
<i style="left:147.5px;top:446px;width:2px;height:5px;background:#8a5a2a;border-radius:1px;opacity:.8"></i>
</div>
<div class="btn" style="left:1319.6px;top:353.2px;height:25.3px;line-height:26px;background:#d9534f">退选</div>
<div class="btn" style="left:1319.6px;top:397.3px;height:25.2px;line-height:26px;background:#337ab7">选课</div>
<div class="btn" style="left:1319.6px;top:440.6px;height:25.3px;line-height:26px;background:#337ab7">选课</div>
<svg class="a" style="left:1290px;top:338px" width="108" height="58" viewBox="1290 338 108 58"><ellipse cx="1343.6" cy="366.4" rx="47.6" ry="22.4" fill="none" stroke="#f51510" stroke-width="3"/></svg>
</body></html>
